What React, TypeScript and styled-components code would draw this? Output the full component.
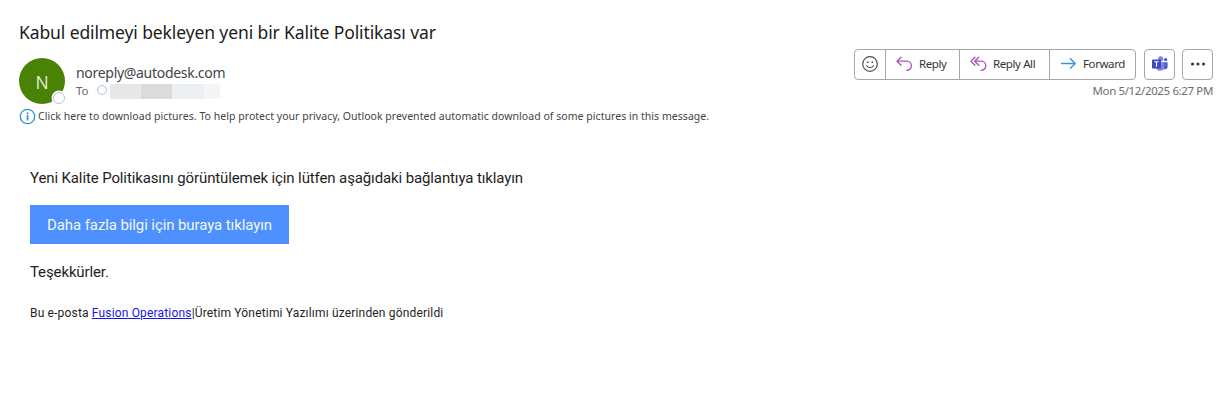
import React from "react";
import styled, { createGlobalStyle } from "styled-components";

const GlobalStyle = createGlobalStyle`
  * { box-sizing: border-box; }
  body { margin: 0; background: #fff; }
`;

const ui = `"Noto Sans", "Open Sans", sans-serif`;
const bodyFont = `Roboto, "Liberation Sans", sans-serif`;

const Message = styled.main`
  width: 1230px;
  height: 411px;
  padding: 20px 17px 0 19px;
  background: #fff;
  font-family: ${ui};
  overflow: hidden;
  white-space: nowrap;
`;

const Subject = styled.h1`
  margin: 0;
  height: 24px;
  font-size: 17.5px;
  line-height: 24px;
  font-weight: 400;
  color: #1c1c1c;
  letter-spacing: -0.11px;
`;

const Header = styled.header`
  display: flex;
  justify-content: space-between;
  height: 62px;
  padding-top: 5px;
`;

const Sender = styled.div`
  display: flex;
  padding-top: 9px;
`;

const Avatar = styled.div`
  position: relative;
  width: 46px;
  height: 46px;
  border-radius: 50%;
  background: #498205;
  color: #e6eedb;
  font-family: "Open Sans", sans-serif;
  font-size: 17.5px;
  font-weight: 400;
  line-height: 48px;
  text-align: center;
`;

const Presence = styled.span`
  position: absolute;
  left: 34px;
  top: 34px;
  width: 12px;
  height: 12px;
  border-radius: 50%;
  border: 1px solid #b0c6d3;
  background: #fff;
  box-shadow: 0 0 0 1.5px #fff;
`;

const SenderText = styled.div`
  padding: 5px 0 0 11px;
`;

const Address = styled.div`
  height: 19px;
  font-size: 14px;
  line-height: 20px;
  letter-spacing: -0.3px;
  color: #444;
`;

const Recipients = styled.div`
  display: flex;
  align-items: center;
  height: 17px;
  font-size: 11.5px;
  color: #666;
`;

const RecipientStatus = styled.span`
  width: 10px;
  height: 10px;
  margin: 0 3px 1px 8px;
  border: 1px solid #a9c5d8;
  border-radius: 50%;
`;

const Redaction = styled.span<{ $w: number; $tone: string }>`
  width: ${(p) => p.$w}px;
  height: 15px;
  margin-top: 2px;
  background: ${(p) => p.$tone};
`;

const Side = styled.div`
  display: flex;
  flex-direction: column;
  align-items: flex-end;
`;

const Toolbar = styled.div`
  display: flex;
  gap: 7px;
  height: 31px;
`;

const ButtonGroup = styled.div`
  display: flex;
  margin-right: 1px;
  border: 1px solid #a6a6a6;
  border-radius: 4px;
`;

const Action = styled.button<{ $w: number }>`
  display: flex;
  align-items: center;
  gap: 6px;
  width: ${(p) => p.$w}px;
  padding: 0 0 2px 10px;
  border: 0;
  background: none;
  font-family: ${ui};
  font-size: 11.5px;
  letter-spacing: -0.4px;
  color: #333;
  & + & { border-left: 1px solid #a6a6a6; }
`;

const IconAction = styled(Action)`
  justify-content: center;
  padding: 0 0 1px;
`;

const SquareButton = styled(IconAction)`
  && { border: 1px solid #a6a6a6; border-radius: 4px; }
`;

const Timestamp = styled.time`
  margin-top: 3px;
  font-size: 11.5px;
  line-height: 16px;
  letter-spacing: -0.37px;
  color: #6c6c6c;
`;

const Notice = styled.div`
  display: flex;
  align-items: center;
  gap: 2px;
  height: 20px;
  font-size: 10.5px;
  letter-spacing: 0.04px;
  color: #444;
`;

const Content = styled.section`
  padding: 41px 0 0 11px;
  font-family: ${bodyFont};
  color: #1e1e1e;
`;

const Paragraph = styled.p`
  margin: 0;
  font-size: 15px;
  line-height: 22px;
  letter-spacing: -0.12px;
`;

const MoreButton = styled.a`
  display: flex;
  align-items: center;
  justify-content: center;
  width: 259px;
  height: 39px;
  margin: 16px 0 17px;
  background: #4d90fe;
  color: #f3f7ff;
  font-size: 15px;
  letter-spacing: -0.1px;
`;

const Footer = styled.p`
  margin: 21px 0 0;
  font-size: 12px;
  line-height: 18px;
  letter-spacing: 0.17px;
`;

const FooterLink = styled.a`
  color: #1a14f0;
  text-decoration: underline;
`;

const SmileIcon = () => (
  <svg width="18" height="18" viewBox="0 0 18 18" fill="none" stroke="#505050" strokeWidth="1.2" strokeLinecap="round">
    <circle cx="9" cy="9" r="7.3" />
    <path d="M5.6 10.7c1.5 2.4 5.3 2.4 6.8 0" />
    <circle cx="6.7" cy="7.2" r=".9" fill="#505050" stroke="none" />
    <circle cx="11.3" cy="7.2" r=".9" fill="#505050" stroke="none" />
  </svg>
);

const ReplyIcon = () => (
  <svg width="17" height="17" viewBox="0 0 17 17" fill="none" stroke="#b04fbd" strokeWidth="1.3" strokeLinecap="round" strokeLinejoin="round">
    <path d="M5 2.2 1 6.2l4 4M1.2 6.2h9.6a4.6 4.6 0 0 1 0 9.2" />
  </svg>
);

const ReplyAllIcon = () => (
  <svg width="17" height="17" viewBox="0 0 17 17" fill="none" stroke="#b04fbd" strokeWidth="1.3" strokeLinecap="round" strokeLinejoin="round">
    <path d="M4.9 2.2.9 6.2l4 4M8.7 2.2l-4 4 4 4M4.9 6.2h6.3a4.6 4.6 0 0 1 0 9.2" />
  </svg>
);

const ForwardIcon = () => (
  <svg width="17" height="17" viewBox="0 0 17 17" fill="none" stroke="#3a96d2" strokeWidth="1.3" strokeLinecap="round" strokeLinejoin="round">
    <path d="M1.5 8.5h13.7M10.4 3.7l4.8 4.8-4.8 4.8" />
  </svg>
);

const TeamsIcon = () => (
  <svg width="18" height="18" viewBox="0 0 18 18">
    <circle cx="14.6" cy="4.6" r="1.7" fill="#5059c9" />
    <path d="M11 7.2h5.6v4.3a2.8 2.8 0 0 1-5.6 0z" fill="#5059c9" />
    <circle cx="9.7" cy="3.7" r="2.5" fill="#7b83eb" />
    <path d="M5 7.2h8.3v5a4.2 4.2 0 0 1-8.3 0z" fill="#7b83eb" />
    <rect x="1" y="4.6" width="9" height="9" rx=".8" fill="#4149b8" />
    <path d="M3.3 6.8h4.4M5.5 6.8v5" stroke="#fff" strokeWidth="1.1" />
  </svg>
);

const MoreIcon = () => (
  <svg width="16" height="4" viewBox="0 0 16 4" fill="#333">
    <circle cx="2.5" cy="2" r="1.5" />
    <circle cx="8" cy="2" r="1.5" />
    <circle cx="13.5" cy="2" r="1.5" />
  </svg>
);

const InfoIcon = () => (
  <svg width="17" height="17" viewBox="0 0 17 17" fill="none" stroke="#2e93d1">
    <circle cx="8.5" cy="8.5" r="7.2" strokeWidth="1.3" />
    <path d="M8.5 7.2v5.2" strokeWidth="1.8" />
    <path d="M8.5 4.4v1.8" strokeWidth="1.8" />
  </svg>
);

export default function App() {
  return (
    <Message>
      <GlobalStyle />
      <Subject>Kabul edilmeyi bekleyen yeni bir Kalite Politikası var</Subject>
      <Header>
        <Sender>
          <Avatar>N<Presence /></Avatar>
          <SenderText>
            <Address>noreply@autodesk.com</Address>
            <Recipients>
              To
              <RecipientStatus />
              <Redaction $w={31} $tone="#e9e6e8" />
              <Redaction $w={31} $tone="#dddadd" />
              <Redaction $w={32} $tone="#ebf0f2" />
              <Redaction $w={16} $tone="#f3f5f7" />
            </Recipients>
          </SenderText>
        </Sender>
        <Side>
          <Toolbar>
            <ButtonGroup>
              <IconAction $w={30} aria-label="React"><SmileIcon /></IconAction>
              <Action $w={74}><ReplyIcon />Reply</Action>
              <Action $w={90}><ReplyAllIcon />Reply All</Action>
              <Action $w={86}><ForwardIcon />Forward</Action>
            </ButtonGroup>
            <SquareButton $w={31} aria-label="Teams"><TeamsIcon /></SquareButton>
            <SquareButton $w={31} aria-label="More"><MoreIcon /></SquareButton>
          </Toolbar>
          <Timestamp>Mon 5/12/2025 6:27 PM</Timestamp>
        </Side>
      </Header>
      <Notice>
        <InfoIcon />
        Click here to download pictures. To help protect your privacy, Outlook prevented automatic download of some pictures in this message.
      </Notice>
      <Content>
        <Paragraph>Yeni Kalite Politikasını görüntülemek için lütfen aşağıdaki bağlantıya tıklayın</Paragraph>
        <MoreButton>Daha fazla bilgi için buraya tıklayın</MoreButton>
        <Paragraph>Teşekkürler.</Paragraph>
        <Footer>
          Bu e-posta <FooterLink>Fusion Operations</FooterLink>|Üretim Yönetimi Yazılımı üzerinden gönderildi
        </Footer>
      </Content>
    </Message>
  );
}
